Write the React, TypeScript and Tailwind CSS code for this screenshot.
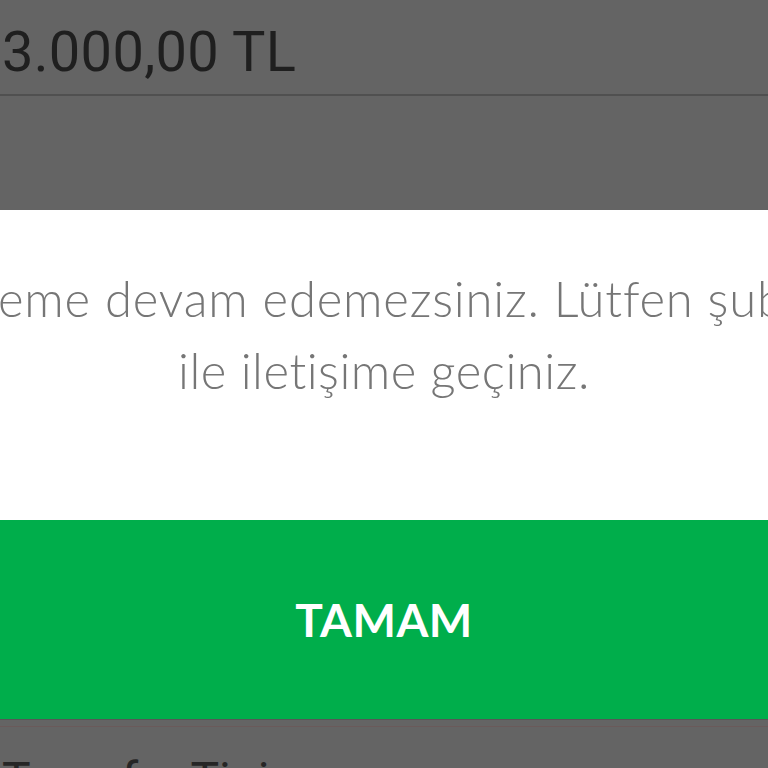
import { FC } from "react";

const App: FC = () => {
    return (
        <div className="w-[768px] h-[768px] overflow-hidden bg-[#646464] flex flex-col">
            {/* amount field under the overlay */}
            <div className="h-[96px] shrink-0 border-b-2 border-[#505050] flex items-end">
                <p className="pl-[2px] pb-[14px] text-[56px] leading-none text-[#1f1f1f] font-['Roboto',sans-serif] tracking-[0.3px]">
                    3.000,00 TL
                </p>
            </div>
            <div className="h-[114px] shrink-0" />

            {/* dialog */}
            <div className="bg-white h-[310px] shrink-0 flex flex-col items-center pt-[52px] font-['Lato',sans-serif] font-light text-[#767676] text-[49px] leading-[72px] tracking-[0.5px]">
                <p className="self-start ml-[-120px] whitespace-nowrap tracking-[0.8px]">Bu işleme devam edemezsiniz. Lütfen şubeniz</p>
                <p className="whitespace-nowrap">ile iletişime geçiniz.</p>
            </div>
            <button className="h-[199px] shrink-0 w-full bg-[#00ae4b] text-white font-['Lato',sans-serif] font-bold text-[46px] tracking-[0.5px]">
                TAMAM
            </button>

            {/* field below the dialog */}
            <div className="border-t border-[#575757] flex-1 flex flex-col">
                <div className="h-[7px] shrink-0 border-b border-[#6a5a5a]" />
                <p className="pl-[2px] pt-[29px] text-[48px] leading-none text-[#262626] font-['Roboto',sans-serif] whitespace-nowrap">
                    Transfer Tipi
                </p>
            </div>
        </div>
    );
};

export default App;
